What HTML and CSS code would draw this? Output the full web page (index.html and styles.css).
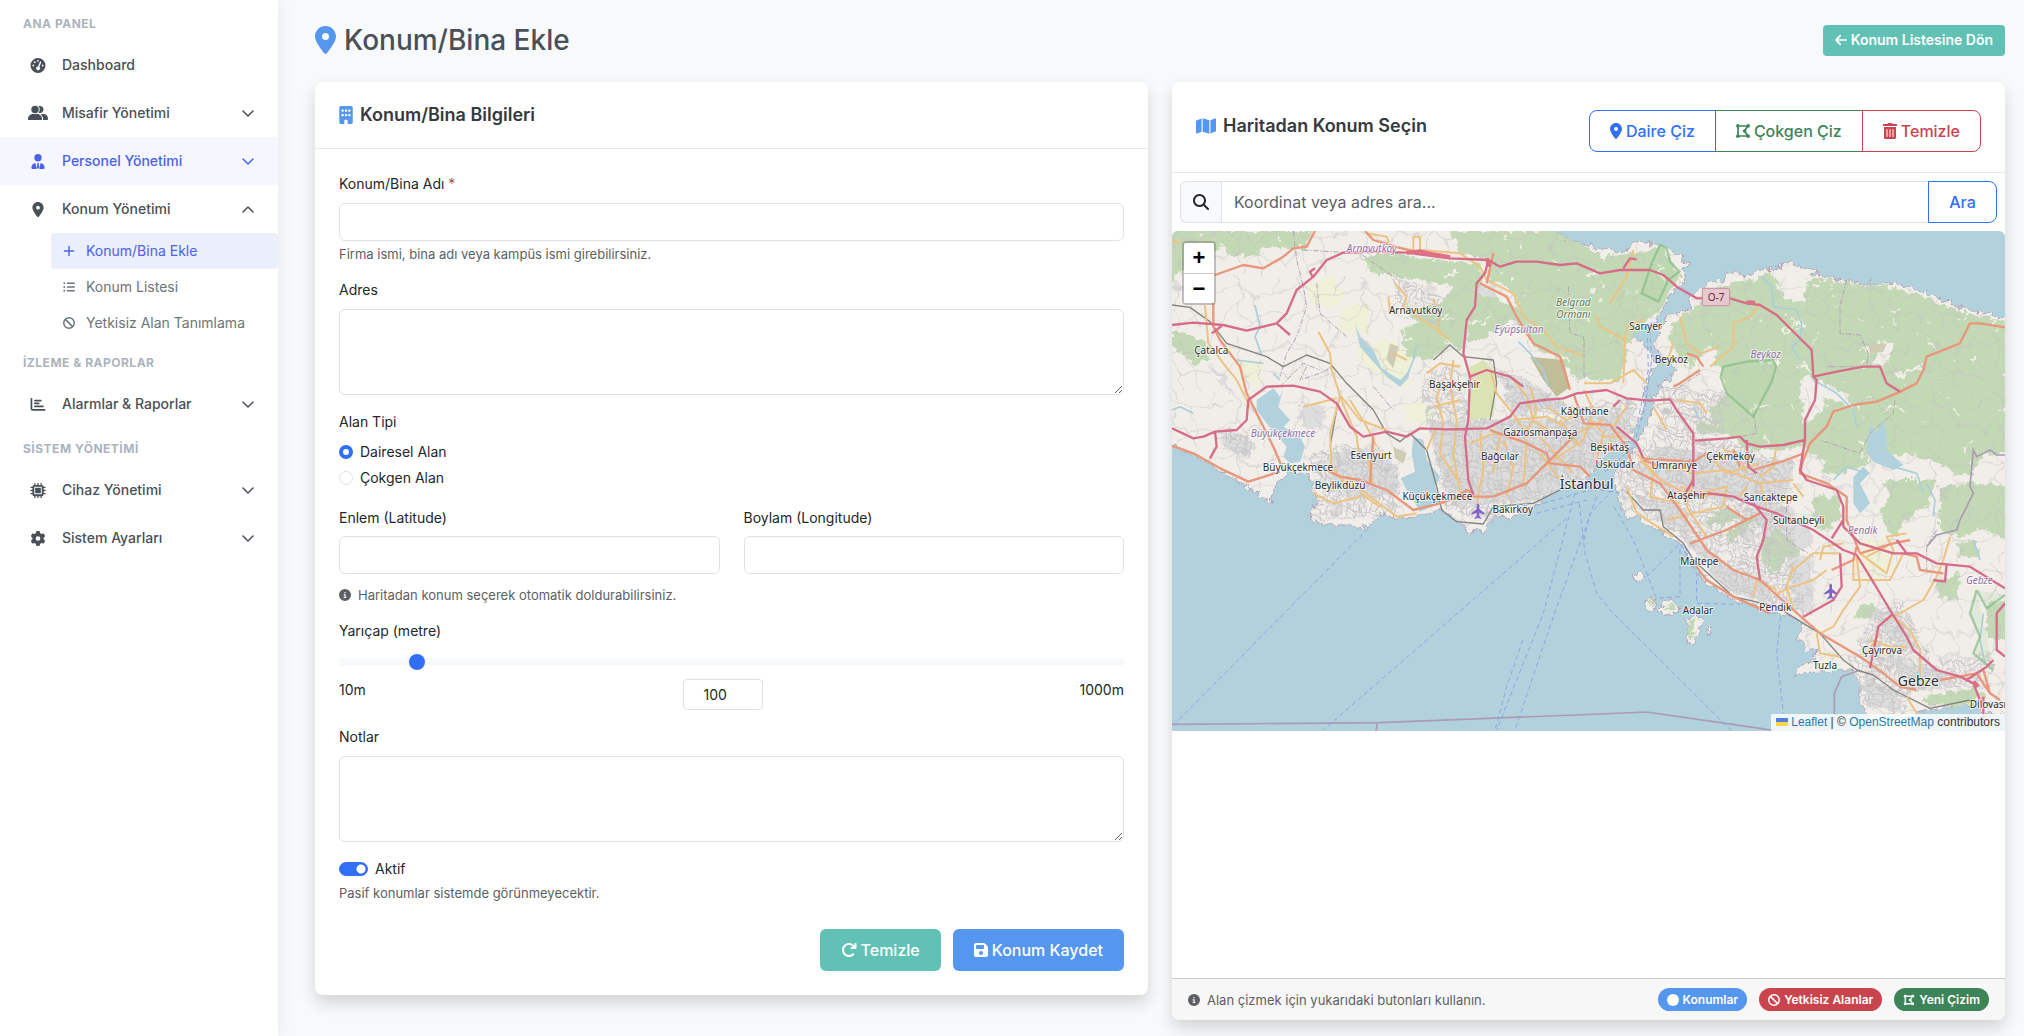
FILE: index.html
```html
<!DOCTYPE html>
<html lang="tr">
<head>
<meta charset="utf-8">
<meta name="viewport" content="width=device-width, initial-scale=1">
<title>Konum/Bina Ekle</title>
<link rel="stylesheet" href="styles.css">
</head>
<body>
<svg class="sprite" aria-hidden="true">
  <symbol id="i-pin" viewBox="0 0 384 512"><path d="M215.7 499.2C267 435 384 279.4 384 192C384 86 298 0 192 0S0 86 0 192c0 87.4 117 243 168.3 307.2c12.3 15.3 35.1 15.3 47.4 0zM192 128a64 64 0 1 1 0 128 64 64 0 1 1 0-128z"/></symbol>
  <symbol id="i-building" viewBox="0 0 384 512"><path d="M48 0C21.500 0 0 21.500 0 48V464c0 26.500 21.500 48 48 48h96V432c0-26.500 21.500-48 48-48s48 21.500 48 48v80h96c26.500 0 48-21.500 48-48V48c0-26.500-21.500-48-48-48H48zM64 240c0-8.800 7.200-16 16-16h32c8.800 0 16 7.200 16 16v32c0 8.800-7.200 16-16 16H80c-8.800 0-16-7.200-16-16V240zm112-16h32c8.800 0 16 7.200 16 16v32c0 8.800-7.200 16-16 16H176c-8.800 0-16-7.200-16-16V240c0-8.800 7.200-16 16-16zm80 16c0-8.800 7.200-16 16-16h32c8.800 0 16 7.200 16 16v32c0 8.800-7.200 16-16 16H272c-8.800 0-16-7.200-16-16V240zM80 96h32c8.800 0 16 7.200 16 16v32c0 8.800-7.200 16-16 16H80c-8.800 0-16-7.200-16-16V112c0-8.800 7.200-16 16-16zm80 16c0-8.800 7.200-16 16-16h32c8.800 0 16 7.200 16 16v32c0 8.800-7.200 16-16 16H176c-8.800 0-16-7.200-16-16V112zM272 96h32c8.800 0 16 7.200 16 16v32c0 8.800-7.200 16-16 16H272c-8.800 0-16-7.200-16-16V112c0-8.800 7.200-16 16-16z"/></symbol>
  <symbol id="i-map" viewBox="0 0 576 512"><path d="M384 476.100L192 421.200V35.900L384 90.800V476.100zm32-1.200V88.400L543.100 37.500c15.800-6.300 32.900 5.300 32.900 22.300V394.600c0 9.800-6 18.600-15.100 22.300L416 474.900zM15.100 95.100L160 37.200V423.600L32.900 474.500C17.100 480.800 0 469.200 0 452.200V117.400c0-9.800 6-18.600 15.100-22.300z"/></symbol>
  <symbol id="i-polygon" viewBox="0 0 448 512"><path d="M64 96H384L272 256L384 416H64Z" fill="none" stroke="currentColor" stroke-width="54"/><circle cx="60" cy="92" r="58"/><circle cx="388" cy="92" r="58"/><circle cx="276" cy="256" r="58"/><circle cx="388" cy="420" r="58"/><circle cx="60" cy="420" r="58"/></symbol>
  <symbol id="i-trash" viewBox="0 0 448 512"><path d="M32 464a48 48 0 0 0 48 48h288a48 48 0 0 0 48-48V128H32zm272-256a16 16 0 0 1 32 0v224a16 16 0 0 1-32 0zm-96 0a16 16 0 0 1 32 0v224a16 16 0 0 1-32 0zm-96 0a16 16 0 0 1 32 0v224a16 16 0 0 1-32 0zM432 32H312l-9.400-18.700A24 24 0 0 0 281.100 0H166.800a23.720 23.720 0 0 0-21.400 13.300L136 32H16A16 16 0 0 0 0 48v32a16 16 0 0 0 16 16h416a16 16 0 0 0 16-16V48a16 16 0 0 0-16-16z"/></symbol>
  <symbol id="i-back" viewBox="0 0 448 512"><path d="M9.400 233.400c-12.500 12.500-12.500 32.800 0 45.300l160 160c12.500 12.500 32.800 12.500 45.300 0s12.500-32.800 0-45.300L109.200 288 416 288c17.700 0 32-14.300 32-32s-14.300-32-32-32l-306.700 0L214.600 118.600c12.500-12.500 12.500-32.800 0-45.300s-32.800-12.500-45.300 0l-160 160z"/></symbol>
  <symbol id="i-search" viewBox="0 0 512 512"><path d="M416 208c0 45.900-14.900 88.300-40 122.700L502.600 457.400c12.500 12.500 12.500 32.800 0 45.300s-32.800 12.500-45.300 0L330.700 376c-34.400 25.200-76.800 40-122.700 40C93.100 416 0 322.900 0 208S93.100 0 208 0S416 93.100 416 208zM208 352a144 144 0 1 0 0-288 144 144 0 1 0 0 288z"/></symbol>
  <symbol id="i-info" viewBox="0 0 512 512"><path d="M256 512A256 256 0 1 0 256 0a256 256 0 1 0 0 512zM216 336h24V272H216c-13.300 0-24-10.700-24-24s10.700-24 24-24h48c13.300 0 24 10.700 24 24v88h8c13.300 0 24 10.700 24 24s-10.700 24-24 24H216c-13.300 0-24-10.700-24-24s10.700-24 24-24zm40-208a32 32 0 1 1 0 64 32 32 0 1 1 0-64z"/></symbol>
  <symbol id="i-redo" viewBox="0 0 512 512"><path d="M386.300 160H336c-17.700 0-32 14.300-32 32s14.300 32 32 32H464c17.700 0 32-14.300 32-32V64c0-17.700-14.300-32-32-32s-32 14.300-32 32v51.200L414.400 97.600c-87.500-87.500-229.300-87.500-316.800 0s-87.500 229.300 0 316.800s229.300 87.500 316.800 0c12.500-12.500 12.500-32.800 0-45.300s-32.800-12.500-45.300 0c-62.500 62.500-163.800 62.500-226.300 0s-62.500-163.800 0-226.300s163.800-62.500 226.300 0L386.300 160z"/></symbol>
  <symbol id="i-save" viewBox="0 0 448 512"><path d="M64 32C28.700 32 0 60.700 0 96V416c0 35.300 28.700 64 64 64H384c35.300 0 64-28.700 64-64V173.300c0-17-6.700-33.300-18.700-45.300L352 50.700C340 38.700 323.700 32 306.700 32H64zm0 96c0-17.700 14.300-32 32-32H288c17.700 0 32 14.300 32 32v64c0 17.700-14.300 32-32 32H96c-17.700 0-32-14.300-32-32V128zM224 288a64 64 0 1 1 0 128 64 64 0 1 1 0-128z"/></symbol>
  <symbol id="i-ban" viewBox="0 0 512 512"><path d="M367.200 412.500L99.500 144.800C77.100 176.100 64 214.500 64 256c0 106 86 192 192 192c41.500 0 79.900-13.100 111.200-35.500zm45.300-45.300C434.900 335.900 448 297.500 448 256c0-106-86-192-192-192c-41.500 0-79.900 13.100-111.200 35.500L412.500 367.200zM0 256a256 256 0 1 1 512 0A256 256 0 1 1 0 256z"/></symbol>
  <symbol id="i-circle" viewBox="0 0 512 512"><circle cx="256" cy="256" r="256"/></symbol>
  <symbol id="i-gear" viewBox="0 0 512 512"><path d="M495.900 166.600c3.200 8.700 .5 18.400-6.400 24.600l-43.300 39.400c1.100 8.300 1.700 16.800 1.700 25.400s-.6 17.100-1.700 25.400l43.300 39.400c6.900 6.200 9.600 15.900 6.400 24.600c-4.400 11.900-9.700 23.300-15.800 34.300l-4.700 8.100c-6.600 11-14 21.400-22.100 31.200c-5.900 7.200-15.700 9.600-24.500 6.800l-55.700-17.700c-13.400 10.300-28.200 18.900-44 25.400l-12.500 57.100c-2 9.100-9 16.300-18.200 17.800c-13.800 2.300-28 3.500-42.500 3.500s-28.700-1.200-42.500-3.500c-9.200-1.500-16.200-8.700-18.200-17.800l-12.500-57.100c-15.800-6.500-30.600-15.100-44-25.400L83.100 425.900c-8.800 2.800-18.600 .3-24.500-6.800c-8.100-9.800-15.500-20.200-22.100-31.200l-4.700-8.100c-6.100-11-11.400-22.400-15.800-34.300c-3.200-8.700-.5-18.400 6.400-24.600l43.300-39.400C64.600 273.100 64 264.600 64 256s.6-17.100 1.700-25.400L22.400 191.200c-6.900-6.200-9.600-15.900-6.400-24.600c4.400-11.900 9.700-23.300 15.800-34.300l4.700-8.100c6.600-11 14-21.400 22.100-31.200c5.900-7.200 15.700-9.600 24.500-6.800l55.700 17.700c13.400-10.300 28.200-18.900 44-25.400l12.500-57.100c2-9.100 9-16.300 18.200-17.800C227.300 1.200 241.500 0 256 0s28.700 1.200 42.500 3.500c9.200 1.500 16.200 8.700 18.200 17.800l12.500 57.100c15.800 6.500 30.600 15.100 44 25.400l55.700-17.700c8.800-2.800 18.600-.3 24.500 6.800c8.100 9.800 15.500 20.200 22.100 31.200l4.700 8.100c6.100 11 11.400 22.400 15.800 34.300zM256 336a80 80 0 1 0 0-160 80 80 0 1 0 0 160z"/></symbol>
  <symbol id="i-chip" viewBox="0 0 512 512"><path d="M128 0h42v64h64V0h44v64h64V0h42v64a64 64 0 0 1 64 64h64v42h-64v64h64v44h-64v64h64v42h-64a64 64 0 0 1-64 64v64h-42v-64h-64v64h-44v-64h-64v64h-42v-64a64 64 0 0 1-64-64H0v-42h64v-64H0v-44h64v-64H0v-42h64a64 64 0 0 1 64-64zM128 128V384H384V128zM160 160H352V352H160z" fill-rule="evenodd"/></symbol>
  <symbol id="i-gauge" viewBox="0 0 512 512"><path fill-rule="evenodd" d="M0 256a256 256 0 1 1 512 0A256 256 0 1 1 0 256zM256 64a30 30 0 1 0 0 60 30 30 0 1 0 0-60zM144 112a30 30 0 1 0 0 60 30 30 0 1 0 0-60zM96 226a30 30 0 1 0 0 60 30 30 0 1 0 0-60zM416 226a30 30 0 1 0 0 60 30 30 0 1 0 0-60zM350 120c-12-5-26 1-31 13L257 288a64 64 0 1 0 45 17L364 151c5-12-2-26-14-31z"/></symbol>
  <symbol id="i-users" viewBox="0 0 640 512"><circle cx="225" cy="144" r="120"/><path d="M0 448c0-90 70-160 160-160h130c90 0 160 70 160 160v16c0 10-6 16-16 16H16c-10 0-16-6-16-16zM384 256c-17 0-33-4-48-11a160 160 0 0 0 0-202 112 112 0 1 1 48 213zM482 480c4-20 4-80-20-115-14-26-32-48-54-66 10-8 24-11 40-11h48c80 0 144 64 144 144 0 32-10 48-32 48z"/></symbol>
  <symbol id="i-tie" viewBox="0 0 448 512"><circle cx="224" cy="128" r="124"/><path d="M134 306C58 316 0 378 0 456v24c0 18 14 32 32 32h150l-48-206zM314 306c76 10 134 72 134 150v24c0 18-14 32-32 32H266zM186 304h76l-18 40 26 112-46 56-46-56 26-112z"/></symbol>
  <symbol id="i-chart" viewBox="0 0 512 512"><g fill="none" stroke="currentColor" stroke-width="60" stroke-linecap="round" stroke-linejoin="round"><path d="M32 62V390q0 50 50 50H480M150 120H350M150 220H280M150 320H420"/></g></symbol>
  <symbol id="i-list" viewBox="0 0 512 512"><g fill="none" stroke="currentColor" stroke-width="54" stroke-linecap="round"><path d="M186 96H484M186 256H484M186 416H484"/></g><circle cx="54" cy="96" r="40"/><circle cx="54" cy="256" r="40"/><circle cx="54" cy="416" r="40"/></symbol>
  <symbol id="i-plus" viewBox="0 0 448 512"><path d="M224 60V452M28 256H420" fill="none" stroke="currentColor" stroke-width="60" stroke-linecap="round"/></symbol>
  <symbol id="i-down" viewBox="0 0 12 12"><path d="M1 4l5 5 5-5" fill="none" stroke="currentColor" stroke-width="1.500" stroke-linecap="round" stroke-linejoin="round"/></symbol>
  <symbol id="i-up" viewBox="0 0 12 12"><path d="M1 9l5-5 5 5" fill="none" stroke="currentColor" stroke-width="1.500" stroke-linecap="round" stroke-linejoin="round"/></symbol>
</svg>

<div class="layout">
  <nav class="sidebar" aria-label="Ana menü">
    <h2 class="nav-title">ANA PANEL</h2>
    <a class="nav-item" href="#"><svg class="nav-icon"><use href="#i-gauge"/></svg><span>Dashboard</span></a>
    <a class="nav-item" href="#"><svg class="nav-icon nav-icon-wide"><use href="#i-users"/></svg><span>Misafir Yönetimi</span><svg class="chevron"><use href="#i-down"/></svg></a>
    <a class="nav-item is-hover" href="#"><svg class="nav-icon"><use href="#i-tie"/></svg><span>Personel Yönetimi</span><svg class="chevron"><use href="#i-down"/></svg></a>
    <a class="nav-item" href="#"><svg class="nav-icon"><use href="#i-pin"/></svg><span>Konum Yönetimi</span><svg class="chevron"><use href="#i-up"/></svg></a>
    <div class="subnav">
      <a class="sub-item is-active" href="#"><svg class="sub-icon"><use href="#i-plus"/></svg>Konum/Bina Ekle</a>
      <a class="sub-item" href="#"><svg class="sub-icon"><use href="#i-list"/></svg>Konum Listesi</a>
      <a class="sub-item" href="#"><svg class="sub-icon"><use href="#i-ban"/></svg>Yetkisiz Alan Tanımlama</a>
    </div>
    <h2 class="nav-title">İZLEME &amp; RAPORLAR</h2>
    <a class="nav-item" href="#"><svg class="nav-icon"><use href="#i-chart"/></svg><span>Alarmlar &amp; Raporlar</span><svg class="chevron"><use href="#i-down"/></svg></a>
    <h2 class="nav-title">SİSTEM YÖNETİMİ</h2>
    <a class="nav-item" href="#"><svg class="nav-icon"><use href="#i-chip"/></svg><span>Cihaz Yönetimi</span><svg class="chevron"><use href="#i-down"/></svg></a>
    <a class="nav-item" href="#"><svg class="nav-icon"><use href="#i-gear"/></svg><span>Sistem Ayarları</span><svg class="chevron"><use href="#i-down"/></svg></a>
  </nav>

  <main class="main">
    <header class="page-head">
      <h1 class="page-title"><svg class="title-icon"><use href="#i-pin"/></svg>Konum/Bina Ekle</h1>
      <a class="btn-back" href="#"><svg class="back-icon"><use href="#i-back"/></svg>Konum Listesine Dön</a>
    </header>

    <div class="columns">
      <section class="card">
        <div class="card-head">
          <h2 class="card-title"><svg class="building-icon"><use href="#i-building"/></svg>Konum/Bina Bilgileri</h2>
        </div>
        <form class="form">
          <div class="field">
            <label for="name">Konum/Bina Adı <span class="required">*</span></label>
            <input class="control" id="name" type="text">
            <p class="hint">Firma ismi, bina adı veya kampüs ismi girebilirsiniz.</p>
          </div>
          <div class="field">
            <label for="address">Adres</label>
            <textarea class="control area" id="address"></textarea>
          </div>
          <fieldset class="field radios">
            <legend>Alan Tipi</legend>
            <label class="check"><input class="radio" type="radio" name="area" checked>Dairesel Alan</label>
            <label class="check"><input class="radio" type="radio" name="area">Çokgen Alan</label>
          </fieldset>
          <div class="field coords">
            <div class="coord"><label for="lat">Enlem (Latitude)</label><input class="control" id="lat" type="text"></div>
            <div class="coord"><label for="lng">Boylam (Longitude)</label><input class="control" id="lng" type="text"></div>
            <p class="hint coords-hint"><svg class="info-icon"><use href="#i-info"/></svg>Haritadan konum seçerek otomatik doldurabilirsiniz.</p>
          </div>
          <div class="field">
            <label for="radius">Yarıçap (metre)</label>
            <input class="range" id="radius" type="range" min="10" max="1000" value="100">
            <div class="range-row"><span>10m</span><input class="number" type="number" value="100" aria-label="Yarıçap değeri"><span>1000m</span></div>
          </div>
          <div class="field">
            <label for="notes">Notlar</label>
            <textarea class="control area" id="notes"></textarea>
          </div>
          <div class="field">
            <label class="check"><input class="switch" type="checkbox" role="switch" checked>Aktif</label>
            <p class="hint">Pasif konumlar sistemde görünmeyecektir.</p>
          </div>
          <div class="actions">
            <button class="btn btn-teal" type="reset"><svg class="btn-icon"><use href="#i-redo"/></svg>Temizle</button>
            <button class="btn btn-blue" type="submit"><svg class="btn-icon btn-icon-narrow"><use href="#i-save"/></svg>Konum Kaydet</button>
          </div>
        </form>
      </section>

      <section class="card map-card">
        <div class="card-head map-head">
          <h2 class="card-title map-title"><svg class="map-icon"><use href="#i-map"/></svg>Haritadan Konum Seçin</h2>
          <div class="tools">
            <button class="tool tool-blue" type="button"><svg class="tool-icon"><use href="#i-pin"/></svg>Daire Çiz</button>
            <button class="tool tool-green" type="button"><svg class="tool-icon tool-icon-wide"><use href="#i-polygon"/></svg>Çokgen Çiz</button>
            <button class="tool tool-red" type="button"><svg class="tool-icon tool-icon-wide"><use href="#i-trash"/></svg>Temizle</button>
          </div>
        </div>
        <div class="map-body">
          <form class="search">
            <span class="search-mark"><svg class="search-icon"><use href="#i-search"/></svg></span>
            <input class="search-input" type="text" placeholder="Koordinat veya adres ara..." aria-label="Koordinat veya adres ara">
            <button class="search-btn" type="button">Ara</button>
          </form>
          <div class="map">
            <svg class="map-art" viewBox="36 33 2499 1500" preserveAspectRatio="xMidYMid slice" role="img" aria-label="İstanbul haritası">
              <defs>
                <filter id="rough" x="-2%" y="-2%" width="104%" height="104%"><feTurbulence type="fractalNoise" baseFrequency="0.05" numOctaves="3" seed="4"/><feDisplacementMap in="SourceGraphic" scale="34" xChannelSelector="R" yChannelSelector="G"/></filter>
                <filter id="tatter" x="-2%" y="-2%" width="104%" height="104%"><feTurbulence type="fractalNoise" baseFrequency="0.02" numOctaves="4" seed="7"/><feDisplacementMap in="SourceGraphic" scale="150" xChannelSelector="R" yChannelSelector="G"/></filter>
                <filter id="wobble" x="-2%" y="-2%" width="104%" height="104%"><feTurbulence type="fractalNoise" baseFrequency="0.02" numOctaves="2" seed="9"/><feDisplacementMap in="SourceGraphic" scale="60" xChannelSelector="R" yChannelSelector="G"/></filter>
                <pattern id="streets" width="76" height="68" patternUnits="userSpaceOnUse" patternTransform="rotate(12)"><path d="M0 8H76M0 22L40 27L76 22M0 40H76M0 56L30 52L76 58M9 0L12 68M25 0V68M40 27V68M52 0L50 40M66 0V68M0 30L25 40M50 40L76 50M12 8L25 22M60 58L66 68" fill="none" stroke="#c6c5c6" stroke-width="3"/></pattern>
                <pattern id="lanes" width="190" height="170" patternUnits="userSpaceOnUse"><path d="M0 40L50 30L90 60L150 50L190 40M30 0L50 30L40 90L70 130L60 170M90 60L110 110L70 130M110 110L190 125M0 125L40 90M150 50L160 0M110 110L120 170" fill="none" stroke="#c2c0c1" stroke-width="3"/></pattern>
                <pattern id="clearings" width="310" height="270" patternUnits="userSpaceOnUse"><path d="M20 30l18-8 6 16-14 10zM120 70l8 4-4 14-14-6zM230 20l20 6-4 8-20-4zM60 180l22-10 10 24-18 12zM250 140l16-4 6 30-18 4zM160 220l8-6 6 8z" fill="#eff0e3"/></pattern>
                <clipPath id="landclip"><path d="M36 33H1180L1240 65 1320 85 1390 96 1412 85 1425 65 1480 72 1510 80 1540 95 1584 130 1570 165 1572 190 1545 215 1520 245 1495 290 1490 305 1440 325 1415 350 1450 375 1475 400 1485 440 1470 480 1450 520 1452 560 1440 600 1420 640 1400 670 1350 690 1320 710 1285 770 1260 800 1200 805 1150 840 1110 865 1050 895 1000 890 970 935 930 935 890 905 845 870 770 890 720 895 660 880 640 905 610 925 570 915 500 915 455 908 450 880 465 850 455 800 450 765 400 755 370 770 345 800 332 848 262 805 170 745 100 705 36 677ZM2535 295L2480 280 2400 262 2320 230 2260 205 2180 188 2100 190 2050 180 1960 160 1900 130 1850 140 1810 150 1770 165 1700 158 1680 180 1620 205 1595 235 1590 265 1530 285 1505 310 1500 345 1480 370 1500 400 1530 430 1545 450 1530 475 1500 500 1480 530 1475 570 1460 610 1440 650 1425 690 1400 720 1370 750 1360 775 1375 795 1372 820 1377 850 1407 900 1432 885 1472 920 1530 950 1572 980 1602 1030 1632 1080 1712 1135 1772 1148 1832 1175 1892 1190 1930 1215 1912 1250 1937 1290 1960 1290 1970 1325 1922 1335 1900 1370 1950 1355 2032 1350 2082 1355 2100 1390 2100 1450 2120 1485 2180 1533H2250L2272 1475 2380 1460 2440 1450 2470 1480 2535 1490Z"/></clipPath>
              </defs>
              <rect class="sea" x="0" y="0" width="2570" height="1560"/>
              <g filter="url(#rough)">
                <g class="land">
                  <path d="M0 0H1120L1180 33 1240 65 1320 85 1390 96 1412 85 1425 65 1480 72 1510 80 1540 95 1584 130 1570 165 1572 190 1545 215 1520 245 1495 290 1490 305 1440 325 1415 350 1450 375 1475 400 1485 440 1470 480 1450 520 1452 560 1440 600 1420 640 1400 670 1350 690 1320 710 1285 770 1260 800 1200 805 1150 840 1110 865 1050 895 1000 890 970 935 930 935 890 905 845 870 770 890 720 895 660 880 640 905 610 925 570 915 500 915 455 908 450 880 465 850 455 800 450 765 400 755 370 770 345 800 332 848 262 805 170 745 100 705 36 677 0 660Z"/>
                  <path d="M2580 305L2535 295 2480 280 2400 262 2320 230 2260 205 2180 188 2100 190 2050 180 1960 160 1900 130 1850 140 1810 150 1770 165 1700 158 1680 180 1620 205 1595 235 1590 265 1530 285 1505 310 1500 345 1480 370 1500 400 1530 430 1545 450 1530 475 1500 500 1480 530 1475 570 1460 610 1440 650 1425 690 1400 720 1370 750 1360 775 1375 795 1372 820 1377 850 1407 900 1432 885 1472 920 1530 950 1572 980 1602 1030 1632 1080 1712 1135 1772 1148 1832 1175 1892 1190 1930 1215 1912 1250 1937 1290 1960 1290 1970 1325 1922 1335 1900 1370 1950 1355 2032 1350 2082 1355 2100 1390 2100 1450 2120 1485 2180 1560H2250L2272 1475 2380 1460 2440 1450 2470 1480 2580 1490Z"/>
                  <path d="M1420 1070L1440 1052 1456 1066 1450 1088 1430 1086ZM1450 1148L1480 1134 1488 1160 1462 1168ZM1496 1172L1510 1150 1540 1140 1560 1158 1550 1180 1510 1186ZM1585 1190L1610 1182 1628 1195 1604 1270 1580 1270 1590 1230 1575 1200ZM1640 1230L1650 1222 1656 1240 1646 1246Z"/>
                </g>
                <g class="field-land">
                  <path d="M440 190L520 170 560 240 500 270 450 240ZM540 260L625 250 625 345 540 340ZM590 380L690 350 760 420 740 500 620 450ZM230 420L310 430 300 500 240 480ZM740 540L830 570 800 620 740 610ZM2100 960L2180 960 2190 1050 2120 1080ZM2200 650L2290 640 2280 700 2210 710Z"/>
                </g>
                <g class="urban">
                  <path d="M180 640L250 640 290 680 250 710 190 680ZM420 540L500 560 480 630 420 620ZM510 690L660 680 720 760 700 830 560 840 500 770ZM800 600L1000 600 1250 600 1420 560 1400 660 1250 780 1130 840 880 860 850 780ZM930 660L1140 660 1140 800 940 800ZM1010 450L1150 510 1230 560 1060 590ZM1490 680L1700 700 1900 740 1890 800 1850 860 1560 830 1420 760ZM1420 830L1560 850 1600 960 1700 1040 1800 1080 1850 1160 1700 1110 1560 940ZM1750 860L1900 860 1960 960 1930 1000 1830 960ZM1880 1000L1960 1010 1960 1180 1900 1170ZM2130 1180L2200 1160 2280 1290 2220 1300ZM2160 1300L2330 1340 2400 1400 2260 1410ZM2110 1380L2200 1400 2240 1480 2120 1460ZM940 200L1000 200 1010 240 960 240ZM150 430L200 470 210 520 180 490Z"/>
                </g>
                <g class="forest">
                  <path d="M0 0H160L200 60 150 110 60 150 0 250ZM180 33H450L440 90 340 80 270 110 200 100ZM600 110L700 100 820 120 960 130 970 180 940 260 920 340 910 390 870 370 820 330 750 290 850 240 880 200 780 180 640 160ZM720 330L780 300 850 350 870 380 800 420 740 410ZM870 33H1180L1240 65 1320 100 1340 200 1310 280 1400 400 1380 480 1250 480 1200 420 1120 380 1060 300 980 350 920 370 930 280 950 220 1080 260 1050 200 990 190 990 130 900 100ZM1300 180L1340 110 1420 100 1500 80 1560 160 1540 200 1500 270 1440 320 1400 380 1350 400 1310 360 1280 270ZM1220 440L1400 390 1400 440 1280 480ZM36 330L130 360 150 420 100 430 36 380ZM1590 270L1680 200 1780 180 1830 150 1860 210 1920 220 1960 170 2100 195 2180 195 2300 235 2400 275 2580 315V700L2470 700 2440 760 2400 770 2360 740 2240 700 2130 720 2120 760 1990 760 1930 680 1760 690 1700 640 1620 640 1590 560 1640 470 1680 400 1640 380 1600 440 1560 430 1530 360 1540 310ZM2170 780L2330 780 2300 860 2240 900 2200 960 2160 880ZM2340 800L2440 790 2580 800V960L2450 930 2400 950 2340 930ZM1800 960L1860 920 1910 980 1920 1000 1870 1020 1850 1070 1810 1030ZM1640 890L1700 860 1740 890 1700 910 1650 920ZM1960 830L2040 830 2040 900 1990 940 1960 890ZM1700 940L1760 890 1790 900 1760 930 1710 970ZM2100 1150L2150 1150 2130 1195 2080 1190ZM2300 1430L2440 1400 2480 1430 2380 1460 2290 1450ZM2330 1080L2400 1060 2390 1140 2340 1130ZM2480 1150L2580 1130V1270L2480 1250ZM1585 1200L1610 1195 1600 1250 1590 1250ZM1462 1150L1480 1140 1482 1156ZM1510 1170L1540 1150 1550 1170ZM2390 970L2450 960 2460 1010 2400 1010Z"/>
                </g>
                <path class="hole" d="M1680 440L1700 520 1650 570 1660 620 1600 600 1590 540 1560 480 1620 430ZM1930 620L2000 560 1990 500 1940 470 1920 480ZM1960 470L1980 520 2080 570 2060 520ZM1860 180L1930 180 1940 250 1880 240ZM2150 360L2200 370 2180 430 2140 440ZM1940 700L2000 720 1990 750 1940 750ZM1990 790L2130 730 2190 820 2150 900 2060 890 2050 810Z"/>
              </g>
              <g clip-path="url(#landclip)">
                <g filter="url(#tatter)"><path d="M700 60H1560V440H700ZM1560 160H2580V720H1700ZM60 33H440V120H60Z" fill="url(#clearings)"/></g>
                <g filter="url(#wobble)">
                  <rect x="0" y="0" width="2570" height="1560" fill="url(#lanes)" opacity=".6"/>
                  <path class="streets" d="M180 640L250 640 290 680 250 710 190 680ZM455 690L660 680 720 760 720 880 460 900ZM800 450L1000 600 1250 560 1420 540 1450 640 1300 800 1000 900 850 860ZM700 150L840 220 850 320 700 260ZM1010 450L1150 510 1230 560 1060 590ZM1490 640L1700 660 1900 730 1890 800 1900 900 1940 1200 1700 1110 1560 940 1380 860 1360 760 1440 680ZM1500 500L1700 520 1700 640 1500 660ZM2130 1160L2230 1140 2330 1340 2420 1400 2260 1410 2220 1480 2120 1460 2060 1360ZM780 460L900 430 920 640 800 600ZM2330 1320L2500 1300V1400H2400Z"/>
                </g>
              </g>
              <path class="park" d="M930 440L970 420 1010 460 1000 590 930 600Z"/>
              <path class="military" d="M1110 410L1210 420 1230 500 1190 530 1150 480Z"/>
              <path class="scrub" d="M690 370L715 380 700 445 680 420ZM700 680L740 700 730 730 705 715ZM2125 375L2180 370 2170 395 2130 400Z"/>
              <g class="water">
                <path d="M290 540L340 505 360 530 370 505 355 560 390 600 370 620 420 650 435 680 420 725 390 730 370 710 380 680 320 610 290 570ZM585 310L600 350 640 390 665 445 720 480 750 450 745 475 720 500 680 470 635 420 600 380ZM760 650L790 660 800 720 840 770 825 800 840 850 780 875 740 810 722 775 765 755 755 700Z"/>
                <path d="M2130 610L2150 640 2170 600 2180 650 2180 690 2230 735 2200 750 2140 725 2120 690ZM2080 770L2110 740 2130 760 2100 790 2130 850 2100 880 2080 850Z"/>
              </g>
              <g class="stream">
                <path d="M285 255L300 320 285 350 305 405M230 420L310 430M1075 365L1110 400 1150 450 1165 500M770 370L760 420 740 470M1805 170L1835 200 1840 260 1910 270 1925 310 1920 360 1895 380 1920 420M1960 480L2030 520 2080 570 2090 620M2200 740L2270 760 2290 820M2120 760L2060 740 2020 780M2300 790L2325 840 2320 890M2470 1180L2460 1260 2475 1330M36 570L60 560 100 580M340 460L360 480M2440 960L2460 1020M1600 560L1620 600"/>
              </g>
              <g class="border">
                <path d="M400 33L410 120 430 200 440 260 410 350 380 400 360 470M440 440L420 480 480 460 520 440M1225 200L1230 340 1270 350 1275 380M1272 370L1272 480M2060 180L2040 260 2040 340 2100 345 2125 400 2120 440 2000 440M1620 460L1560 500 1520 540M2205 540L2200 580 2130 640 2100 700 1980 660M1780 580L1790 640 1740 650M1880 830L1880 960 1960 1010M2330 930L2300 980 2300 1050M430 90L600 100 700 170M470 190L480 280 560 350M360 500L430 430 480 450M640 500L700 570"/>
              </g>
              <g class="admin">
                <path d="M36 1513L660 1508 1320 1482 1460 1476 1800 1525 2023 1560M652 1508L648 1533M2023 1500V1420L2045 1370 2100 1350M2535 705H2510L2490 690 2450 710 2440 690 2430 800 2440 820 2400 900 2390 930 2330 945 2300 980"/>
              </g>
              <g class="reserve"><path d="M1500 75L1520 85 1530 125 1558 155 1525 180 1495 245 1445 220 1475 130ZM1690 440L1760 425 1840 420 1848 440 1835 485 1780 590 1700 520 1682 470ZM2450 1110L2480 1165 2535 1125M2450 1110L2430 1180 2460 1250 2440 1300 2500 1350"/></g>
              <g class="ferry">
                <path d="M625 925L36 1520M1220 895L490 1530M1245 820L1150 1180 1010 1530M1310 830L1180 1190 1065 1530M1258 850L1275 1000 1310 1120 1360 1180 1715 1533M1272 960L1290 880 1360 810M1362 860L1420 960 1490 1135 1560 1130 1560 980M1460 1070L1560 970 1610 1060 1610 1150 1740 1153M1862 1190L1850 1300 1870 1480M1088 1260L1040 1400 1005 1530M1080 870L1360 790M1130 880L1280 840M1272 800L1380 820M1470 330L1475 420 1455 560 1420 680 1330 760M1462 330L1465 450 1430 620"/>
              </g>
              <g class="rail">
                <path d="M36 255L90 262 150 305 200 370 320 410 370 440 440 405 510 430 560 490 640 570 680 640 720 665 750 640 800 690 830 800 845 870 890 905 970 912 1000 860 1120 850 1200 810M1400 815L1450 870 1500 870 1510 920 1570 970 1600 1020 1720 1130 1850 1160 1930 1210 1980 1240 2050 1320 2090 1350 2140 1365 2200 1410 2310 1465 2430 1440 2500 1455M820 420L870 375 910 410 1000 420 1010 490 990 600M510 680L530 570"/>
              </g>
              <g class="primary">
                <path d="M36 60L60 70M135 255L145 370 190 430 230 480 270 560M475 335L510 400 515 450 540 525 600 600 680 630M430 560L530 535M540 530L590 650 600 720M540 530L510 640 515 740 560 800M570 540L620 620 650 680M620 40L680 50 690 80 760 90V50H780V90L900 100 960 140 980 180 1060 220 1090 290 1150 330 1190 380 1250 400 1272 410M705 190L740 230 730 260 830 330 870 360M685 230L690 280M820 240L840 280 835 330M850 480L830 530 850 610 840 700 900 790M880 420L870 500 890 600 880 700 900 820M990 450L1010 520 1050 570 1100 640M1060 480L1100 530 1120 600 1180 640M930 670L1000 640 1100 650 1150 620M960 640L970 750 950 850M1020 640L1000 760M1110 500L1130 570 1110 620 1050 660M1140 700L1200 780M1272 490L1350 490 1420 450 1460 490M1310 290L1320 320 1395 360 1390 490M1420 90L1400 170 1350 250M1395 360L1400 320 1450 300M1272 510L1300 570 1270 660 1180 720M1290 600L1330 640 1310 720M1560 290L1580 370 1620 400 1680 380M1800 250L1770 290 1720 310 1720 380 1650 440M1540 370L1520 430M1550 540L1620 550 1640 580M1480 560L1520 630M1430 700L1500 780 1600 830 1700 820M1530 740L1600 760 1700 750 1800 790 1900 780M1660 720L1700 760 1800 730M1850 670L1840 740 1800 770M1400 800L1430 880 1540 950M1560 800L1620 820 1700 800M1980 1020L1990 980 2050 970M1900 1040L1880 1100 1900 1170M1850 1120L1900 1100 1960 1080 2000 1050M2100 1000L2180 1060 2200 990 2180 950 2240 940M2090 1010L2100 1100 2050 1170 2020 1220 1980 1240M2080 1020L2080 1080 2190 1080 2230 1000M2330 1070L2290 1140 2220 1180 2170 1200M2370 950L2350 1020 2330 1070M1970 1240L1980 1300 2040 1310M2200 1190L2250 1230 2280 1290 2280 1370M2130 1260L2190 1280 2240 1280M2160 1240L2120 1300M2240 1430L2270 1480M560 770L630 830 710 890 770 880M620 700L640 800M700 400L740 420M1130 640L1240 760M1200 600L1260 680"/>
                <path d="M800 460L840 430 900 440M820 560L900 540M830 620L800 690M1030 660L1060 740 1040 830M1100 660L1090 800M1160 560L1220 600 1300 560M1180 650L1250 640 1330 600M1400 560L1360 620M1330 650L1390 650M1440 720L1480 760 1470 830 1560 850M1600 760L1580 860 1640 950M1700 800L1690 860 1600 880M1800 790L1820 860M1740 830L1760 800M1520 900L1600 880M1760 760L1730 700 1690 690M1900 790L1930 830M1890 1060L1960 1000 2040 1000M1780 1130L1790 1080 1850 1110M2120 1010L2180 980M600 820L660 860M460 820L520 850 600 830M1060 600L1160 590 1210 620"/>
              </g>
              <g class="trunk">
                <path d="M165 165L250 135 310 145 370 110 400 85 440 80 465 33M160 250V320L180 360 240 440 260 520 300 600 340 680 370 750M36 677L100 700 180 745 265 785 360 755M615 33L640 60 760 95M470 735L540 770 600 780 680 810 760 870 840 850 900 830 1000 830 1100 790 1240 650M640 650L630 790M880 840L920 810 940 820M960 190L1040 230 1070 290 1120 370 1200 410 1230 510M990 630L1100 670 1160 700 1170 730 1260 740 1290 770M1240 520L1272 610 1350 615 1400 680 1420 750 1500 790 1560 870 1640 990 1720 1050 1800 1080 1900 1170 1980 1240 2100 1310 2170 1360 2220 1400 2270 1410M1450 715L1520 720 1600 725 1640 700M1540 500L1560 490 1620 450M1580 400L1610 410 1630 440M2535 322L2460 310 2430 310 2400 370 2300 410 2290 450 2270 490 2210 520 2150 545 2080 555 2020 575 2000 620 1950 670 1930 720 1920 760 2000 790 2060 830 2060 900 2100 1000M1590 970L1700 930 1780 890 1800 880M1602 1030L1640 1080 1720 1130 1830 1180M1780 750L1880 720 1930 700M1700 860L1760 900M2100 1000L2200 970 2250 960M2230 1000L2270 1010 2280 1050 2350 1060M2340 1380L2450 1360 2490 1420 2520 1440M2015 1050L2080 1020 2090 980M2470 1350L2490 1420M1720 690L1740 740M1000 100L980 190M1530 750L1450 720"/>
              </g>
              <g class="motorway">
                <path d="M36 315L100 308 190 315 260 332 350 310 380 280 410 210 460 170 500 120 550 98 640 95 740 98 870 115 985 120 1020 140 1070 125 1130 125 1200 135 1250 130 1320 160 1380 150H1470L1510 165 1550 200 1610 235H1710L1760 250 1800 255 1850 285 1910 345 1955 390 1960 470 1970 480 1965 540 1935 600V660L1870 675 1800 680 1760 670 1740 650 1700 655 1605 662M350 310L390 345M460 175L450 155 465 145M155 340L185 318M985 120L975 160 950 190 945 260 920 300 910 400 930 470 925 600 915 650 925 780 940 825M36 625L100 655 130 650 165 635 230 630 260 600 265 540 320 500 400 497 480 515 530 550 570 620 610 650 680 635 740 650 780 625 860 628 980 625 1050 590 1080 550 1150 540 1210 535 1250 520 1340 510 1400 535 1470 542 1530 538 1550 570 1600 640V800M930 470L980 450 1050 470 1090 500M1600 780L1570 830 1650 820 1720 830 1790 860 1850 880 1960 930 2050 990 2090 1005 2130 1070 2190 1170 2240 1250 2260 1290 2330 1350 2400 1370 2440 1390 2460 1440M1370 620L1430 670 1450 715M1780 850L1820 900 1810 960 1790 1010 1800 1080M1760 660L1765 740 1790 760M1935 660L1920 750 1940 780 2030 810 2050 860 2050 920 2100 970 2200 1000 2270 1000 2330 1030 2430 1040 2535 1105M2360 1030L2355 1085 2320 1080M2040 1000L2045 1100 2020 1140 1930 1190M2050 900L2015 955M2130 1345L2155 1220 2200 1180M1960 470L2030 455 2110 440 2160 440 2180 490 2220 515M1390 145L1410 115 1430 118M1450 1400M2535 1150L2510 1180 2510 1290 2535 1310M2470 1430V1520M165 635L170 680 150 715M2420 1380L2480 1340 2500 1320M2210 960L2240 1000M1360 560L1380 540"/>
              </g>
              <g class="ramps"><path d="M740 98L780 94 820 103 870 112M1760 247L1785 248M980 115L988 140M2440 1385L2455 1400"/></g>
              <g class="plane"><path d="M950 855L954 850 958 855V867L973 879V884L958 878V888L964 894V897L954 894 944 897V894L950 888V878L935 884V879L950 867Z"/><path d="M2008 1095L2012 1090 2016 1095V1107L2031 1119V1124L2016 1118V1128L2022 1134V1137L2012 1134 2002 1137V1134L2008 1128V1118L1993 1124V1119L2008 1107Z"/></g>
              <rect class="shield" x="1627" y="205" width="82" height="52" rx="4"/>
              <text class="shield-text" x="1668" y="242">O-7</text>
              <g class="district">
                <text x="635" y="97">Arnavutköy</text><text x="1077" y="338">Eyüpsultan</text><text x="369" y="651">Büyükçekmece</text><text x="1817" y="415">Beykoz</text><text x="2108" y="941">Pendik</text><text x="2458" y="1093">Gebze</text>
              </g>
              <g class="woods"><text x="1240" y="258">Belgrad</text><text x="1240" y="293">Ormanı</text></g>
              <g class="town">
                <text x="767" y="282">Arnavutköy</text><text x="154" y="403">Çatalca</text><text x="884" y="505">Başakşehir</text><text x="1274" y="584">Kâğıthane</text><text x="1141" y="649">Gaziosmanpaşa</text><text x="1020" y="719">Bağcılar</text><text x="633" y="718">Esenyurt</text><text x="414" y="754">Büyükçekmece</text><text x="540" y="806">Beylikdüzü</text><text x="832" y="840">Küçükçekmece</text><text x="1058" y="880">Bakırköy</text><text x="1457" y="329">Sarıyer</text><text x="1534" y="428">Beykoz</text><text x="1349" y="693">Beşiktaş</text><text x="1366" y="744">Üsküdar</text><text x="1543" y="746">Ümraniye</text><text x="1712" y="719">Çekmeköy</text><text x="1580" y="837">Ataşehir</text><text x="1832" y="844">Sancaktepe</text><text x="1916" y="912">Sultanbeyli</text><text x="1618" y="1034">Maltepe</text><text x="1614" y="1181">Adalar</text><text x="1846" y="1173">Pendik</text><text x="2166" y="1301">Çayırova</text><text x="1995" y="1347">Tuzla</text><text x="2484" y="1464">Dilovası</text>
              </g>
              <g class="city"><text x="1280" y="808">İstanbul</text><text x="2275" y="1397">Gebze</text></g>
            </svg>
            <div class="zoom">
              <button class="zoom-btn" type="button" aria-label="Yakınlaştır">+</button>
              <button class="zoom-btn" type="button" aria-label="Uzaklaştır">−</button>
            </div>
            <p class="credit"><svg class="flag" viewBox="0 0 12 8"><path fill="#5280de" d="M0 0h12v4H0z"/><path fill="#f8d648" d="M0 4h12v4H0z"/></svg><a href="#">Leaflet</a> | © <a href="#">OpenStreetMap</a> contributors</p>
          </div>
        </div>
        <footer class="map-foot">
          <p class="hint"><svg class="info-icon"><use href="#i-info"/></svg>Alan çizmek için yukarıdaki butonları kullanın.</p>
          <div class="badges">
            <span class="badge badge-blue"><svg class="badge-icon"><use href="#i-circle"/></svg>Konumlar</span>
            <span class="badge badge-red"><svg class="badge-icon"><use href="#i-ban"/></svg>Yetkisiz Alanlar</span>
            <span class="badge badge-green"><svg class="badge-icon"><use href="#i-polygon"/></svg>Yeni Çizim</span>
          </div>
        </footer>
      </section>
    </div>
  </main>
</div>
</body>
</html>
```
FILE: styles.css
```css
* { box-sizing: border-box; }

body {
  margin: 0;
  background: #f8f9fb;
  color: #23272b;
  font: 14px/22px Inter, "Liberation Sans", sans-serif;
}

h1, h2, p { margin: 0; }
a { text-decoration: none; }
button, input, textarea { font: inherit; color: inherit; }
svg { fill: currentColor; flex: none; }
.sprite { position: absolute; width: 0; height: 0; }

.layout { display: flex; min-height: 100vh; }

/* Sidebar */
.sidebar {
  flex: none;
  width: 278px;
  padding-top: 3px;
  background: #fff;
  box-shadow: 0 0 16px rgba(0, 0, 0, .08);
}
.nav-title {
  padding: 12px 23px 8px;
  color: #adb4bb;
  font-size: 12px;
  line-height: 18px;
  font-weight: 700;
  letter-spacing: .5px;
}
.nav-item {
  display: flex;
  align-items: center;
  height: 48px;
  padding: 0 24px 0 28px;
  color: #495057;
  font-weight: 500;
}
.nav-item span { flex: 1; padding-left: 14px; }
.nav-icon { width: 20px; height: 15px; }
.nav-icon-wide { height: 16px; }
.chevron { width: 12px; height: 12px; }
.is-hover { background: #f5f6ff; color: #4a62e4; }
.subnav { padding: 0 0 1px 51px; }
.sub-item {
  display: flex;
  align-items: center;
  gap: 11px;
  height: 36px;
  padding-left: 12px;
  border-radius: 4px;
  color: #6c747c;
}
.sub-icon { width: 12px; height: 12px; }
.is-active { background: #ebeefb; color: #4a62e4; }

/* Page */
.main { flex: 1; min-width: 0; padding: 16px 19px 16px 37px; }
.page-head { display: flex; justify-content: space-between; align-items: center; height: 48px; margin-bottom: 18px; }
.page-title { display: flex; align-items: center; gap: 8px; color: #4a5057; font-size: 28px; line-height: 34px; font-weight: 500; }
.title-icon { width: 21px; height: 28px; color: #5596ef; }
.btn-back {
  display: flex;
  align-items: center;
  gap: 4px;
  height: 31px;
  padding: 0 12px;
  border-radius: 4px;
  background: #62c1b5;
  color: #fff;
  font-weight: 600;
}
.back-icon { width: 12px; height: 14px; }

.columns { display: grid; grid-template-columns: 1fr 1fr; gap: 24px; align-items: start; }
.card { border-radius: 8px; background: #fff; box-shadow: 0 8px 16px rgba(0, 0, 0, .15); }
.card-head { display: flex; align-items: center; height: 67px; padding: 0 24px; border-bottom: 1px solid #e6e9ec; }
.card-title { display: flex; align-items: center; gap: 7px; color: #343a40; font-size: 18px; line-height: 26px; font-weight: 600; }
.building-icon { width: 14px; height: 18px; color: #5596ef; }

/* Form */
.form { padding: 24px; }
.field { margin: 0 0 16px; padding: 0; border: 0; }
.field label, .field legend { display: block; padding: 0; margin-bottom: 8px; }
.required { color: #ca444d; }
.control {
  display: block;
  width: 100%;
  height: 38px;
  padding: 8px 12px;
  border: 1px solid #dee2e6;
  border-radius: 6px;
  background: #fff;
}
.area { height: 86px; resize: vertical; }
.hint { display: flex; align-items: center; gap: 7px; color: #5b5f63; font-size: 13px; line-height: 18px; }
.field .hint { margin-top: 4px; }
.info-icon { width: 12px; height: 12px; }
.radios { margin-bottom: 18px; }
.field .check { display: flex; align-items: center; gap: 7px; height: 22px; margin-bottom: 4px; }
.radios .check:last-child { margin-bottom: 0; }
.radio, .switch { appearance: none; flex: none; margin: 0; border: 1px solid #dee2e6; background: #fff; }
.radio { width: 14px; height: 14px; border-radius: 50%; }
.radio:checked { border: 4px solid #306ff6; }
.switch { width: 29px; height: 14px; border-radius: 7px; }
.switch:checked { border-color: #306ff6; background: radial-gradient(circle at 21px 6px, #fff 4px, #306ff6 5px); }
.coords { display: grid; grid-template-columns: 1fr 1fr; column-gap: 24px; }
.coords .coords-hint { grid-column: 1 / -1; margin-top: 4px; }

.range { appearance: none; display: block; width: 100%; height: 24px; margin: 0 0 5px; background: none; }
.range::-webkit-slider-runnable-track { height: 8px; border-radius: 8px; background: #f8f9fb; }
.range::-webkit-slider-thumb { appearance: none; width: 16px; height: 16px; margin-top: -4px; border-radius: 50%; background: #306ff6; }
.range-row { display: flex; justify-content: space-between; }
.number { width: 80px; height: 31px; padding: 4px 8px; border: 1px solid #dee2e6; border-radius: 4px; text-align: center; }
.number::-webkit-inner-spin-button { opacity: 0; }

.coords .control { margin-bottom: 8px; }
.coords label { margin-bottom: 7px; }

.actions { display: flex; justify-content: flex-end; gap: 12px; margin-top: 27px; }
.btn { display: flex; align-items: center; gap: 4px; height: 42px; padding: 0 21px; border: 0; border-radius: 6px; color: #fff; font-size: 16px; font-weight: 500; }
.btn-teal { background: #62c1b5; }
.btn-blue { background: #5596ef; }
.btn-icon { width: 16px; height: 16px; }
.btn-icon-narrow { width: 14px; }

/* Map card */
.map-card { display: flex; flex-direction: column; min-height: calc(100vh - 98px); }
.map-head { justify-content: space-between; height: 91px; padding: 8px 24px 0; }
.map-title { padding-bottom: 10px; }
.map-icon { width: 20px; height: 18px; color: #5596ef; }
.tools { display: flex; }
.tool { display: flex; align-items: center; gap: 4px; height: 42px; padding: 0 20px; border: 1px solid; background: #fff; font-size: 16px; font-weight: 500; }
.tool + .tool { margin-left: -1px; }
.tool:first-child { border-radius: 8px 0 0 8px; }
.tool:last-child { border-radius: 0 8px 8px 0; }
.tool-icon { width: 12px; height: 16px; }
.tool-icon-wide { width: 14px; }
.tool-blue { color: #306ff6; }
.tool-green { color: #3e8459; }
.tool-red { color: #ca444d; }

.map-body { flex: 1; }
.search { display: flex; height: 42px; margin: 8px; }
.search-mark { display: flex; align-items: center; justify-content: center; width: 41px; border: 1px solid #dee2e6; border-right: 0; border-radius: 6px 0 0 6px; background: #f8f9fb; }
.search-icon { width: 16px; height: 16px; }
.search-input { flex: 1; min-width: 0; padding: 0 12px; border: 1px solid #dee2e6; font-size: 16px; }
.search-input::placeholder { color: #5b5f63; }
.search-btn { width: 69px; margin-left: -1px; border: 1px solid #306ff6; border-radius: 0 8px 8px 0; background: #fff; color: #306ff6; font-size: 16px; font-weight: 500; }

.map { position: relative; height: 500px; overflow: hidden; border-radius: 6px 6px 0 0; }
.map-art { display: block; width: 100%; height: 100%; fill: none; }
.zoom { position: absolute; top: 10px; left: 10px; border: 2px solid rgba(0, 0, 0, .2); border-radius: 4px; background-clip: padding-box; }
.zoom-btn { display: block; width: 30px; height: 30px; padding: 0; border: 0; border-radius: 2px 2px 0 0; background: #fff; color: #000; font: bold 22px/30px "Liberation Sans", sans-serif; }
.zoom-btn + .zoom-btn { border-top: 1px solid #ccc; border-radius: 0 0 2px 2px; }
.credit { position: absolute; right: 0; bottom: 0; padding: 0 5px; background: rgba(255, 255, 255, .8); color: #333; font: 12px/17px "Liberation Sans", sans-serif; }
.credit a { color: #2a78ab; }
.flag { width: 12px; height: 8px; margin-right: 3px; }

.map-foot { display: flex; align-items: center; justify-content: space-between; height: 42px; padding: 0 16px; border-top: 1px solid #cbcccd; border-radius: 0 0 8px 8px; background: #f7f7f8; }
.badges { display: flex; gap: 12px; }
.badge { display: flex; align-items: center; gap: 4px; height: 23px; padding: 0 9px; border-radius: 12px; color: #fff; font-size: 12px; line-height: 18px; font-weight: 600; }
.badge-icon { width: 12px; height: 12px; }
.badge-blue { background: #5596ef; }
.badge-red { background: #ca444d; }
.badge-green { background: #3e8459; }

/* Map drawing */
.sea { fill: #b1d1dc; }
.land { fill: #f1eee9; stroke: #b3a0b3; stroke-width: 3; }
.field-land { fill: #eef0d8; }
.urban { fill: #dedddd; }
.forest { fill: #c3d9b5; }
.hole { fill: #f1eee9; }
.streets { fill: url(#streets); }
.park { fill: #dbe3b2; }
.military { fill: #c0bd99; }
.scrub { fill: #cfcbb4; }
.water { fill: #b1d1dc; }
.stream { stroke: #a9cfdc; stroke-width: 5; stroke-linejoin: round; }
.border { stroke: #b3a2b4; stroke-width: 3; stroke-dasharray: 16 5 4 5; }
.admin { stroke: #ab9bb4; stroke-width: 5; }
.reserve { stroke: #86bd84; stroke-width: 7; stroke-opacity: .7; fill: #a9d0a0; fill-opacity: .2; }
.ferry { stroke: #8da5e8; stroke-width: 3; stroke-dasharray: 14 10; }
.rail { stroke: #85837f; stroke-width: 4; stroke-linejoin: round; }
.primary { stroke: #edc383; stroke-width: 6; stroke-linejoin: round; }
.trunk { stroke: #e9967a; stroke-width: 7; stroke-linejoin: round; }
.motorway { stroke: #d76c88; stroke-width: 7; stroke-linejoin: round; }
.ramps { stroke: #df6f83; stroke-width: 12; }
.plane { fill: #8163c8; }
.shield { fill: #e6c9cf; stroke: #c98f9f; stroke-width: 3; }
.map-art text { font-family: "Noto Sans", sans-serif; font-size: 30px; text-anchor: middle; paint-order: stroke; stroke: rgba(255, 255, 255, .7); stroke-width: 6; stroke-linejoin: round; }
.town { fill: #2d2d2d; }
.map-art .city text { font-size: 42px; fill: #2d2d2d; }
.district { fill: #8f70a0; font-style: italic; }
.woods { fill: #5f7d5a; font-style: italic; }
.map-art .shield-text { fill: #6d2a3d; stroke: none; }
```
